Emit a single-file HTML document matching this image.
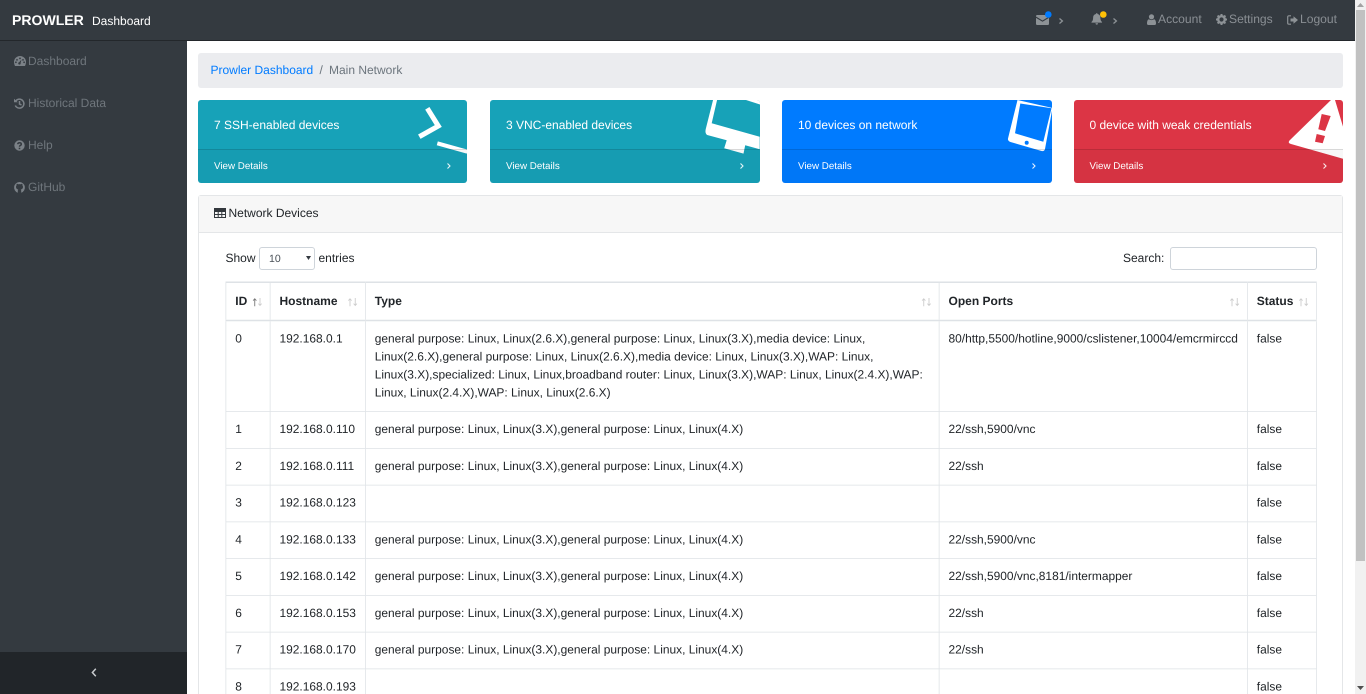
<!DOCTYPE html>
<html><head><meta charset="utf-8"><title>Prowler Dashboard</title>
<style>
*{box-sizing:border-box}
html,body{margin:0;padding:0;width:1366px;height:694px;overflow:hidden;background:#fff}
#root{position:relative;width:1366px;height:694px;overflow:hidden;background:#fff;font-family:"Liberation Sans",sans-serif;font-size:12px;color:#212529;text-rendering:geometricPrecision}
.a{position:absolute;white-space:nowrap}
#nav{left:0;top:0;width:1355px;height:41px;background:#343a40;border-bottom:1px solid #23272b}
#side{left:0;top:41px;width:187px;height:653px;background:#343a40}
#tog{left:0;top:652px;width:187px;height:42px;background:#212529}
.g{color:#8a8f94;line-height:14px;font-size:12.1px}
.s{color:#6f767c;line-height:14px}
svg{position:absolute;overflow:visible}
.card{position:absolute;top:100px;height:83px;border-radius:3px;overflow:hidden;color:#fff}
.card .t{position:absolute;left:16px;top:18px;line-height:15px;font-size:12px}
.card .f{position:absolute;left:0;right:0;top:49px;height:34px;background:rgba(0,0,0,.03);border-top:1px solid rgba(0,0,0,.125)}
.card .v{position:absolute;left:16px;top:10px;font-size:9.8px;line-height:14px}
.card .ic{left:0;top:0}
.card .ch{right:16px;top:13px}
#tbl{position:absolute;left:0;top:0;width:1454px;border-collapse:collapse;table-layout:fixed;font-size:16px;transform:translate(225.5px,281.5px) scale(.75);transform-origin:0 0}
#tbl td,#tbl th{border:1px solid #dee2e6;padding:12px;vertical-align:top;line-height:24px;text-align:left;position:relative;white-space:nowrap}
#tbl th{height:51px;font-weight:bold;border-bottom:2px solid #dee2e6;border-top:2px solid #dee2e6;vertical-align:middle;padding:0 12px;color:#212529}
#tbl td{height:49px;font-size:15.93px}
.ar{right:10px;top:20px}
</style></head><body><div id="root">
<div class="a" id="nav"></div>
<div class="a" style="left:12px;top:11px;color:#fff;line-height:18px"><b style="font-size:14.06px">PROWLER</b></div>
<div class="a" style="left:92px;top:12px;color:#fff;line-height:18px;font-size:12px">Dashboard</div>

<svg style="left:1035.500px;top:15px" width="13" height="10" viewBox="0 0 13 11" preserveAspectRatio="none"><path fill="#8d9296" d="M0 1.200Q0 0 1.200 0h10.600Q13 0 13 1.200v.5L6.500 6 0 1.700zM0 3.200l6.500 4.200L13 3.200v6.600Q13 11 11.800 11H1.200Q0 11 0 9.800z"/></svg>
<svg style="left:1045px;top:10.500px" width="7" height="7"><circle cx="3.300" cy="3.500" r="3.300" fill="#007bff"/></svg>
<svg style="left:1059px;top:17.500px" width="5" height="6"><path fill="none" stroke="#8d9296" stroke-width="1.300" d="M.5.500L3.400 3 .5 5.500"/></svg>
<svg style="left:1091px;top:13.300px" width="11.500" height="11.700" viewBox="0 0 12 12"><path fill="#8d9296" d="M6 0Q6.900 0 6.900 1Q9.800 1.600 9.800 5Q9.800 8 11.500 9.300V10H.5V9.300Q2.200 8 2.200 5Q2.200 1.600 5.100 1Q5.100 0 6 0zM4.600 10.600h2.800Q7.200 12 6 12T4.600 10.600z"/></svg>
<svg style="left:1099.700px;top:10.500px" width="7" height="7"><circle cx="3.300" cy="3.500" r="3.300" fill="#ffc107"/></svg>
<svg style="left:1113px;top:17.500px" width="5" height="6"><path fill="none" stroke="#8d9296" stroke-width="1.300" d="M.5.500L3.400 3 .5 5.500"/></svg>

<svg style="left:1147px;top:14px" width="9" height="11" viewBox="0 0 9 11"><circle cx="4.500" cy="2.800" r="2.600" fill="#8d9296"/><path fill="#8d9296" d="M1.800 5.200Q4.500 7 7.200 5.200Q9 5.800 9 9.500Q9 11 7.500 11h-6Q0 11 0 9.500Q0 5.800 1.800 5.200z"/></svg>
<div class="a g" style="left:1158px;top:12px">Account</div>
<svg style="left:1216px;top:14px" width="11" height="11" viewBox="0 0 11 11"><circle cx="5.500" cy="5.500" r="3.300" fill="none" stroke="#8d9296" stroke-width="2.400"/><path stroke="#8d9296" stroke-width="2" d="M5.500 0v2M5.500 9v2M0 5.500h2M9 5.500h2M1.600 1.600l1.400 1.400M8 8l1.400 1.400M1.600 9.400L3 8M8 3l1.400-1.400"/></svg>
<div class="a g" style="left:1229px;top:12px">Settings</div>
<svg style="left:1287px;top:15px" width="11" height="10" viewBox="0 0 11 10"><path fill="none" stroke="#8d9296" stroke-width="1.200" d="M4 .8H2Q.7.8.7 2v6Q.7 9.200 2 9.200h2"/><path fill="#8d9296" d="M3.500 3.500h3V1.200L11 5 6.500 8.800V6.500h-3z"/></svg>
<div class="a g" style="left:1300px;top:12px">Logout</div>

<div class="a" id="side"></div>
<svg style="left:14px;top:56px" width="12" height="10" viewBox="0 0 12 10"><path fill="#7b8187" fill-rule="evenodd" d="M6 0a6 6 0 0 1 6 6q0 2.200-1 4H1Q0 8.200 0 6a6 6 0 0 1 6-6zM6 1.500a.9.900 0 1 0 0 1.800a.9.900 0 0 0 0-1.800zM3 3a.9.900 0 1 0 0 1.800a.9.900 0 0 0 0-1.800zM9 3a.9.900 0 1 0 0 1.800a.9.900 0 0 0 0-1.800zM1.900 5.400a.9.900 0 1 0 0 1.800a.9.900 0 0 0 0-1.800zM10.100 5.400a.9.900 0 1 0 0 1.800a.9.900 0 0 0 0-1.800zM7.500 3.500L5.200 6.200a1.200 1.200 0 1 0 1.400.9z"/></svg>
<div class="a s" style="left:28px;top:54px">Dashboard</div>
<svg style="left:14px;top:98px" width="11" height="11" viewBox="0 0 11 11"><path fill="none" stroke="#7b8187" stroke-width="1.500" d="M2 2.700A4.500 4.500 0 1 1 1.300 7.500M5.500 3v3l2 1"/><path fill="#7b8187" d="M0 .8l3.800 3.400H0z"/></svg>
<div class="a s" style="left:28px;top:96px">Historical Data</div>
<svg style="left:14px;top:140px" width="11" height="11" viewBox="0 0 11 11"><circle cx="5.500" cy="5.500" r="5.200" fill="#7b8187"/><path fill="none" stroke="#343a40" stroke-width="1.500" d="M3.700 4.200Q3.900 2.700 5.500 2.700Q7.300 2.700 7.300 4.100Q7.300 5 6.200 5.500Q5.500 5.900 5.500 6.800"/><rect x="4.700" y="7.700" width="1.600" height="1.500" fill="#343a40"/></svg>
<div class="a s" style="left:28px;top:138px">Help</div>
<svg style="left:14px;top:182px" width="11" height="11" viewBox="0 0 11 11"><path fill="#7b8187" fill-rule="evenodd" d="M5.500 0a5.500 5.500 0 0 1 1.700 10.700V8.800q0-1-.5-1.300Q9 7.200 9 4.900q0-1-.6-1.600q.2-.8-.1-1.500Q7.500 1.800 6.800 2.300q-1.300-.3-2.600 0Q3.500 1.800 2.700 1.800Q2.400 2.500 2.600 3.300Q2 3.900 2 4.900q0 2.300 2.300 2.600Q3.800 7.800 3.800 8.800v1.900A5.500 5.500 0 0 1 5.500 0z"/></svg>
<div class="a s" style="left:28px;top:180px">GitHub</div>
<div class="a" id="tog"></div>
<svg style="left:91px;top:668px" width="6" height="9" viewBox="0 0 6 9"><path fill="none" stroke="#c8cbce" stroke-width="1.500" d="M4.800.8L1.400 4.500l3.400 3.700"/></svg>

<div class="a" style="left:198px;top:53px;width:1145px;height:35px;background:#ebecef;border-radius:3px"></div>
<div class="a" style="left:210.500px;top:63px;line-height:14px;color:#007bff">Prowler Dashboard</div>
<div class="a" style="left:319.500px;top:63px;line-height:14px;color:#6c757d">/</div>
<div class="a" style="left:329px;top:63px;line-height:14px;color:#6c757d">Main Network</div>

<div class="card" style="left:198px;width:269px;background:#17a2b8">
<svg class="ic" width="270" height="83"><path fill="none" stroke="#fff" stroke-width="5" d="M229.300 8.300l11 17.700-19 10.700"/><path fill="none" stroke="#fff" stroke-width="4" d="M239.300 43.300l30 8.400"/></svg>
<div class="t">7 SSH-enabled devices</div><div class="f"><div class="v">View Details</div><svg class="ch" width="4" height="6"><path fill="none" stroke="#e4f4f7" stroke-width="1.100" d="M.5.500L3 3 .5 5.500"/></svg></div></div>

<div class="card" style="left:490px;width:270px;background:#17a2b8">
<svg class="ic" width="270" height="83"><g transform="translate(-490 -100)"><path fill="#fff" d="M713.300 99h4l-5.600 24.300 48 13.400v12.600l-14.500-4-1.700 8.300-19.300-5.300 2.500-8-19.500-5.300Q704.500 133 706 128z"/><path fill="#fff" d="M746 100h14v4.500z"/></g></svg>
<div class="t">3 VNC-enabled devices</div><div class="f"><div class="v">View Details</div><svg class="ch" width="4" height="6"><path fill="none" stroke="#e4f4f7" stroke-width="1.100" d="M.5.500L3 3 .5 5.500"/></svg></div></div>

<div class="card" style="left:782px;width:269.500px;background:#007bff">
<svg class="ic" width="270" height="83"><g transform="translate(-782 -100)"><path fill="#fff" fill-rule="evenodd" d="M1017.500 100l35 8-7.500 41q-.5 2.500-3.500 2l-31-9q-3-1-2.500-3.500zM1020.300 103.500l-5.300 29.800 28.300 8.400 8.200-33.500zM1026.700 140.700a2 2 0 1 0 0 4a2 2 0 0 0 0-4z"/></g></svg>
<div class="t">10 devices on network</div><div class="f"><div class="v">View Details</div><svg class="ch" width="4" height="6"><path fill="none" stroke="#e4f0ff" stroke-width="1.100" d="M.5.500L3 3 .5 5.500"/></svg></div></div>

<div class="card" style="left:1074px;width:269px;background:#dc3545">
<svg class="ic" width="270" height="83"><g transform="translate(-1074 -100)"><path fill="#fff" fill-rule="evenodd" d="M1331 100h4l9 30v29l-53-15q-3.500-1-1.500-3.500zM1321.700 114l9 2-5.700 15-6.700-1.700zM1316.700 134l8.300 2-2.300 7.300-7.700-1.600z"/></g></svg>
<div class="t" style="left:15.500px">0 device with weak credentials</div><div class="f"><div class="v" style="left:15.500px">View Details</div><svg class="ch" width="4" height="6"><path fill="none" stroke="#fbe8ea" stroke-width="1.100" d="M.5.500L3 3 .5 5.500"/></svg></div></div>

<div class="a" style="left:198px;top:195px;width:1145px;height:520px;border:1px solid #e4e6e8;border-radius:3px"></div>
<div class="a" style="left:199px;top:196px;width:1143px;height:36.500px;background:#f7f7f7;border-bottom:1px solid #e4e6e8"></div>
<svg style="left:214px;top:208px" width="12" height="10" viewBox="0 0 12 10"><path fill="none" stroke="#33383d" stroke-width="1" d="M.5.500h11v9H.5zM.5 3.500h11M.5 6.500h11M4.200.500v9M7.800.500v9"/><path fill="#33383d" d="M.5.500h11v2.500H.5z"/></svg>
<div class="a" style="left:228.500px;top:206px;line-height:14px">Network Devices</div>

<div class="a" style="left:225.500px;top:251px;line-height:14px">Show</div>
<div class="a" style="left:259px;top:247px;width:56px;height:23px;border:1px solid #ced4da;border-radius:3px;background:#fff"></div>
<div class="a" style="left:269px;top:253px;line-height:13px;font-size:10.500px;color:#495057">10</div>
<svg style="left:306px;top:256px" width="5" height="4"><path d="M0 0h5L2.500 4z" fill="#343a40"/></svg>
<div class="a" style="left:318.500px;top:251px;line-height:14px">entries</div>
<div class="a" style="left:1123px;top:251px;line-height:14px">Search:</div>
<div class="a" style="left:1170px;top:247px;width:146.500px;height:23px;border:1px solid #ced4da;border-radius:3px;background:#fff"></div>

<table id="tbl"><colgroup><col style="width:59px"><col style="width:127px"><col style="width:765px"><col style="width:411px"><col style="width:92px"></colgroup>
<thead><tr>
<th>ID<svg class="ar" width="13" height="11" viewBox="0 0 13 11"><path fill="none" stroke="#777" stroke-width="1.200" d="M3 11V1M.8 3.500L3 1l2.200 2.500"/><path fill="none" stroke="#ccc" stroke-width="1.200" d="M10 0v10M7.800 7.500L10 10l2.200-2.500"/></svg></th>
<th>Hostname<svg class="ar" width="13" height="11" viewBox="0 0 13 11"><path fill="none" stroke="#ccc" stroke-width="1.200" d="M3 11V1M.8 3.500L3 1l2.200 2.500M10 0v10M7.800 7.500L10 10l2.200-2.500"/></svg></th>
<th>Type<svg class="ar" width="13" height="11" viewBox="0 0 13 11"><path fill="none" stroke="#ccc" stroke-width="1.200" d="M3 11V1M.8 3.500L3 1l2.200 2.500M10 0v10M7.800 7.500L10 10l2.200-2.500"/></svg></th>
<th>Open Ports<svg class="ar" width="13" height="11" viewBox="0 0 13 11"><path fill="none" stroke="#ccc" stroke-width="1.200" d="M3 11V1M.8 3.500L3 1l2.200 2.500M10 0v10M7.800 7.500L10 10l2.200-2.500"/></svg></th>
<th>Status<svg class="ar" width="13" height="11" viewBox="0 0 13 11"><path fill="none" stroke="#ccc" stroke-width="1.200" d="M3 11V1M.8 3.500L3 1l2.200 2.500M10 0v10M7.800 7.500L10 10l2.200-2.500"/></svg></th>
</tr></thead>
<tbody>
<tr><td>0</td><td>192.168.0.1</td><td>general purpose: Linux, Linux(2.6.X),general purpose: Linux, Linux(3.X),media device: Linux,<br>Linux(2.6.X),general purpose: Linux, Linux(2.6.X),media device: Linux, Linux(3.X),WAP: Linux,<br>Linux(3.X),specialized: Linux, Linux,broadband router: Linux, Linux(3.X),WAP: Linux, Linux(2.4.X),WAP:<br>Linux, Linux(2.4.X),WAP: Linux, Linux(2.6.X)</td><td>80/http,5500/hotline,9000/cslistener,10004/emcrmirccd</td><td>false</td></tr>
<tr><td>1</td><td>192.168.0.110</td><td>general purpose: Linux, Linux(3.X),general purpose: Linux, Linux(4.X)</td><td>22/ssh,5900/vnc</td><td>false</td></tr>
<tr><td>2</td><td>192.168.0.111</td><td>general purpose: Linux, Linux(3.X),general purpose: Linux, Linux(4.X)</td><td>22/ssh</td><td>false</td></tr>
<tr><td>3</td><td>192.168.0.123</td><td></td><td></td><td>false</td></tr>
<tr><td>4</td><td>192.168.0.133</td><td>general purpose: Linux, Linux(3.X),general purpose: Linux, Linux(4.X)</td><td>22/ssh,5900/vnc</td><td>false</td></tr>
<tr><td>5</td><td>192.168.0.142</td><td>general purpose: Linux, Linux(3.X),general purpose: Linux, Linux(4.X)</td><td>22/ssh,5900/vnc,8181/intermapper</td><td>false</td></tr>
<tr><td>6</td><td>192.168.0.153</td><td>general purpose: Linux, Linux(3.X),general purpose: Linux, Linux(4.X)</td><td>22/ssh</td><td>false</td></tr>
<tr><td>7</td><td>192.168.0.170</td><td>general purpose: Linux, Linux(3.X),general purpose: Linux, Linux(4.X)</td><td>22/ssh</td><td>false</td></tr>
<tr><td>8</td><td>192.168.0.193</td><td></td><td></td><td>false</td></tr>
</tbody></table>

<div class="a" style="left:1355px;top:0;width:11px;height:694px;background:#f1f1f1"></div>
<div class="a" style="left:1356px;top:10px;width:9px;height:551px;background:#c1c1c1"></div>
<svg style="left:1357px;top:3px" width="7" height="4"><path d="M0 4h7L3.500 0z" fill="#a3a3a3"/></svg>
<svg style="left:1357px;top:686px" width="7" height="4"><path d="M0 0h7L3.500 4z" fill="#505050"/></svg>
</div></body></html>
